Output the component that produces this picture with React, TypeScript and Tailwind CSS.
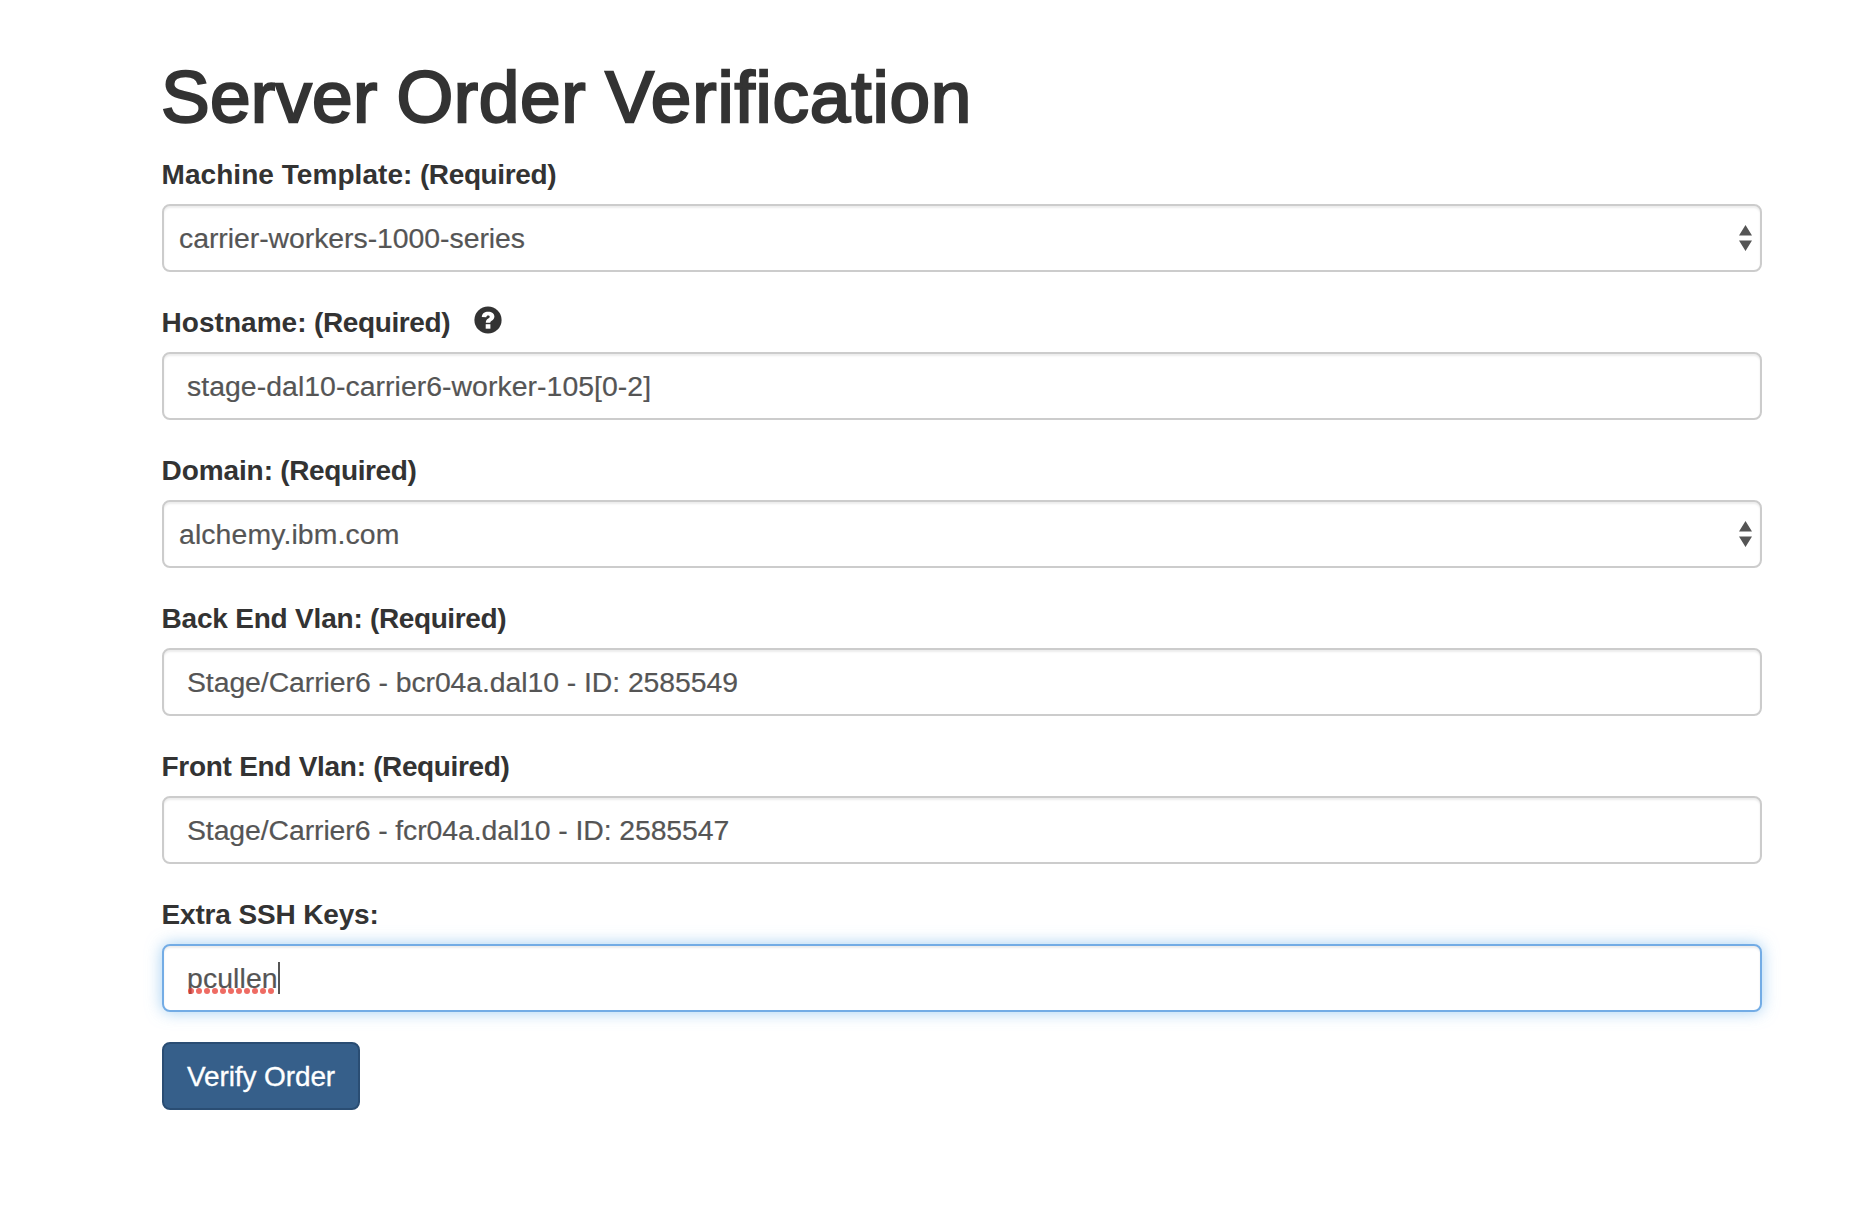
import React from "react";

type Field = {
  label: string;
  labelSpacing: string;
  value: string;
  valueSpacing: string;
  kind: "select" | "text" | "focused";
  required?: boolean;
  help?: boolean;
};

const fields: Field[] = [
  { label: "Machine Template:", labelSpacing: "tracking-[0.06px]", required: true, value: "carrier-workers-1000-series", valueSpacing: "tracking-[-0.04px]", kind: "select" },
  { label: "Hostname:", labelSpacing: "tracking-[0.04px]", required: true, value: "stage-dal10-carrier6-worker-105[0-2]", valueSpacing: "tracking-[0.05px]", kind: "text", help: true },
  { label: "Domain:", labelSpacing: "tracking-[-0.09px]", required: true, value: "alchemy.ibm.com", valueSpacing: "tracking-[0.11px]", kind: "select" },
  { label: "Back End Vlan:", labelSpacing: "tracking-[-0.2px]", required: true, value: "Stage/Carrier6 - bcr04a.dal10 - ID: 2585549", valueSpacing: "tracking-[-0.07px]", kind: "text" },
  { label: "Front End Vlan:", labelSpacing: "tracking-[-0.28px]", required: true, value: "Stage/Carrier6 - fcr04a.dal10 - ID: 2585547", valueSpacing: "tracking-[-0.09px]", kind: "text" },
  { label: "Extra SSH Keys:", labelSpacing: "tracking-[-0.15px]", value: "pcullen", valueSpacing: "tracking-[0.1px]", kind: "focused" },
];

function HelpIcon() {
  return (
    <svg className="ml-[23.5px] mt-[4px] h-[28px] w-[28px] shrink-0" viewBox="0 0 28 28" aria-label="Help">
      <circle cx="14" cy="14" r="13.6" fill="#333" />
      <path d="M7.8 10.9C8 7.500 10.600 5.700 14.100 5.700C17.900 5.700 20.400 7.600 20.400 10.500C20.400 12.500 19.300 13.700 17.700 14.700C16.600 15.400 16.300 15.700 16.300 16.700H11.800C11.800 14.600 12.500 13.500 14.300 12.400C15.300 11.800 15.700 11.400 15.700 10.700C15.700 9.900 15.100 9.400 14.100 9.400C13 9.400 12.400 10 12.300 11.200Z" fill="#fff" />
      <rect x="11.7" y="18.200" width="4.700" height="4.500" fill="#fff" />
    </svg>
  );
}

function SelectArrows() {
  return (
    <svg className="ml-auto h-[26px] w-[13px] shrink-0" viewBox="0 0 13 26" aria-hidden="true">
      <path d="M6.500 0L13 10.500H0Z M0 15.500H13L6.500 26Z" fill="#555" />
    </svg>
  );
}

function SpellingDots() {
  return (
    <svg className="absolute left-[1px] top-[30px] h-[6px] w-[87px]" viewBox="0 0 87 6" aria-hidden="true">
      {Array.from({ length: 11 }, (_, i) => (
        <circle key={i} cx={3 + i * 8} cy="3" r="3" fill="#e8392f" fillOpacity="0.75" />
      ))}
    </svg>
  );
}

function Control({ field }: { field: Field }) {
  const base = "flex h-[68px] items-center rounded-[8px] border-2 bg-white text-[28.4px] leading-[40px] text-[#555] whitespace-pre [-webkit-text-stroke:0.2px_#555]";
  if (field.kind === "select") {
    return (
      <div className={`${base} border-[#ccc] pl-[15px] pr-[8px] shadow-[inset_0_2px_2px_rgba(0,0,0,0.075)]`}>
        <span className={field.valueSpacing}>{field.value}</span>
        <SelectArrows />
      </div>
    );
  }
  if (field.kind === "focused") {
    return (
      <div className={`${base} border-[#73ace5] px-[23px] shadow-[inset_0_2px_2px_rgba(0,0,0,0.075),0_0_16px_rgba(102,175,233,0.6)]`}>
        <span className="relative">
          <span className={field.valueSpacing}>{field.value}</span>
          <SpellingDots />
        </span>
        <span className="h-[32px] w-[2px] bg-[#555]" />
      </div>
    );
  }
  return (
    <div className={`${base} border-[#ccc] px-[23px] shadow-[inset_0_2px_2px_rgba(0,0,0,0.075)]`}>
      <span className={field.valueSpacing}>{field.value}</span>
    </div>
  );
}

export default function App() {
  return (
    <main className="min-h-screen bg-white pt-[57px] font-['Liberation_Sans',Arial,sans-serif] text-[#333]">
      <form className="ml-[162px] w-[1600px]">
        <h1 className="-ml-px mb-[17px] h-[80px] text-[73px] font-normal leading-[80px] whitespace-nowrap [word-spacing:-1.6px] [-webkit-text-stroke:2.3px_#333]">
          <span className="tracking-[0.25px]">Server </span>
          <span className="tracking-[0.6px]">Order </span>
          <span className="tracking-[0.82px]">Verification</span>
        </h1>
        {fields.map((field) => (
          <div key={field.label} className="mb-[30px]">
            <div className="-ml-[0.5px] mb-[10px] flex h-[40px] text-[28px] font-bold leading-[42px]">
              <span className="whitespace-nowrap">
                <span className={field.labelSpacing}>{field.label}</span>
                {field.required && <span className="tracking-[-0.38px]"> (Required)</span>}
              </span>
              {field.help && <HelpIcon />}
            </div>
            <Control field={field} />
          </div>
        ))}
        <button type="button" className="flex h-[68px] w-[198px] items-center justify-center rounded-[8px] border-2 border-[#2a4d73] bg-[#365f8a] pt-[2px] text-[28px] leading-[40px] tracking-[-0.1px] text-white whitespace-nowrap [-webkit-text-stroke:0.3px_#fff]">
          Verify Order
        </button>
      </form>
    </main>
  );
}
